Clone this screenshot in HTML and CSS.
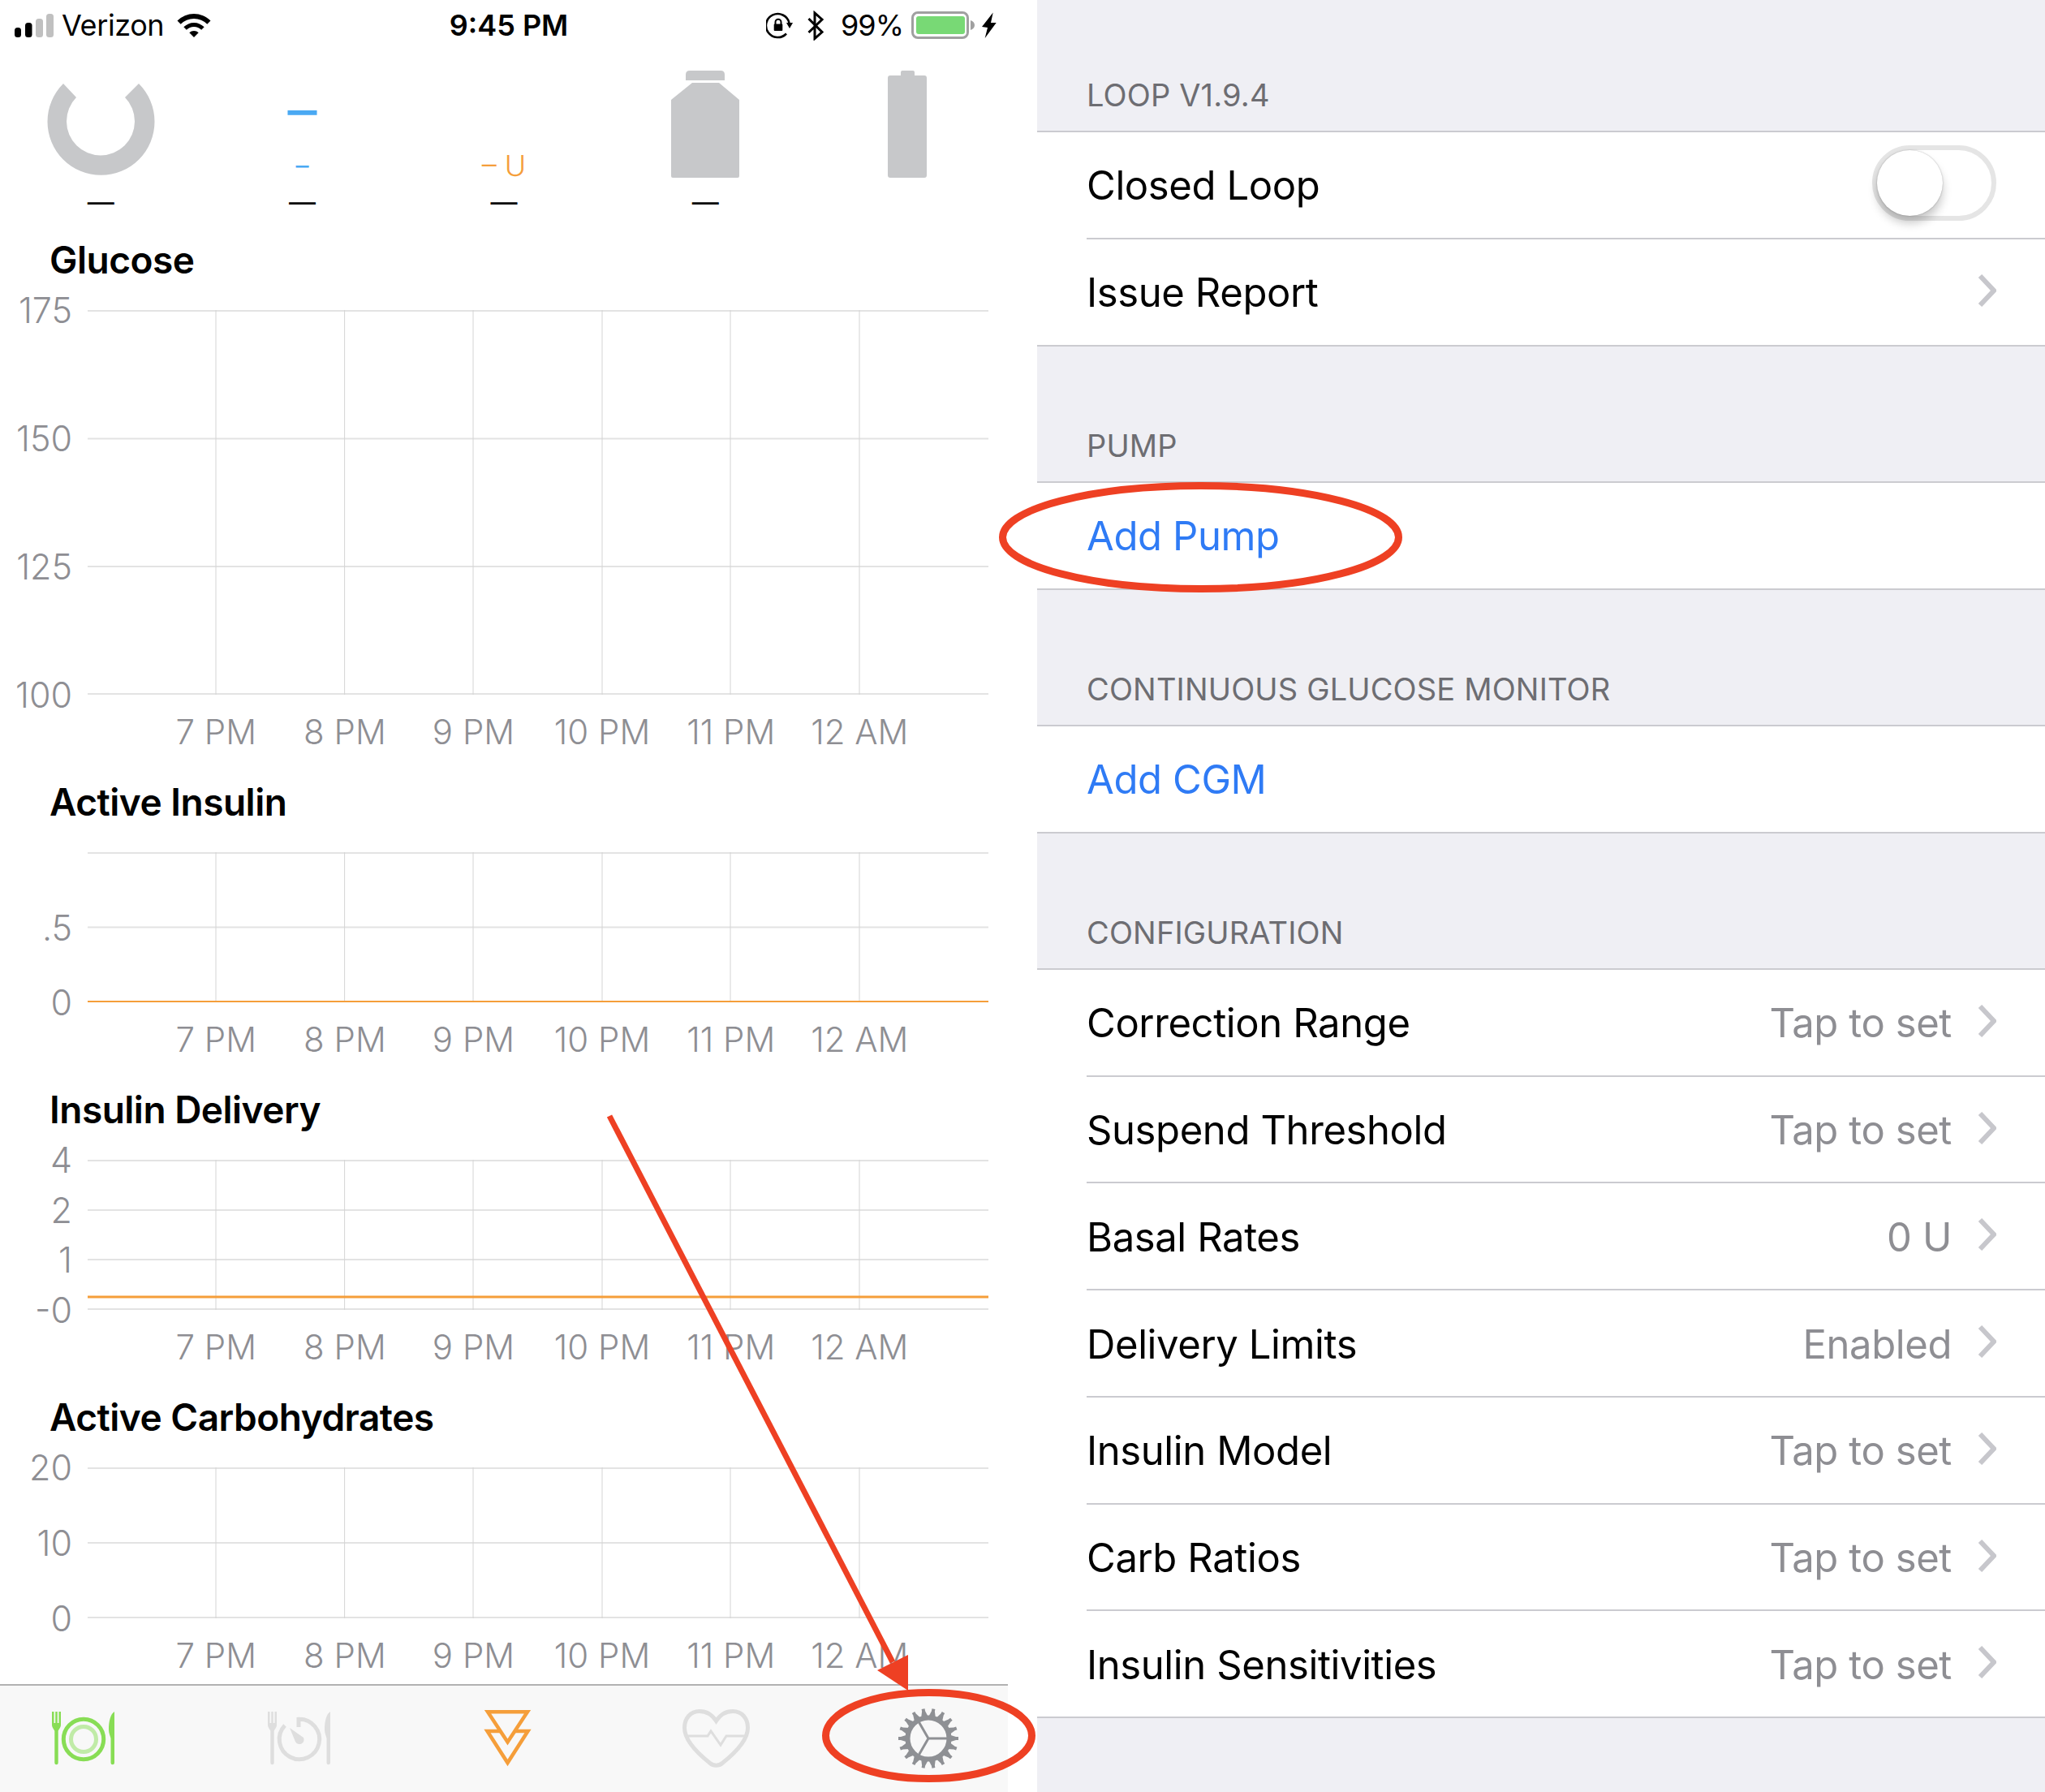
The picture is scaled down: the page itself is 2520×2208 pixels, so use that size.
FILE: index.html
```html
<!DOCTYPE html>
<html lang="en">
<head>
  <meta charset="UTF-8">
  <meta name="viewport" content="width=device-width, initial-scale=1">
  <title>Loop</title>
  <link rel="stylesheet" href="styles.css">
</head>
<body>

  <div class="page">

    <!-- Status screen -->
    <main class="phone">
      <header class="status-bar">
        <div class="status-left">
          <svg class="signal" width="48" height="29" viewBox="0 0 48 29">
            <rect x="0" y="17" width="8" height="12" rx="3.5" fill="#000"/>
            <rect x="13" y="11" width="8.5" height="18" rx="3.5" fill="#000"/>
            <rect x="26" y="6" width="9" height="23" rx="3.5" fill="#c0c0c0"/>
            <rect x="39" y="0" width="9" height="29" rx="3.5" fill="#c0c0c0"/>
          </svg>
          <span class="carrier">Verizon</span>
          <svg class="wifi" width="42" height="29" viewBox="219 15 42 29">
            <path d="M219.5 23.5A29 29 0 0 1 260.5 23.5L256.3 27.7A23 23 0 0 0 223.7 27.7ZM227.3 31.3A18 18 0 0 1 252.7 31.3L249.2 34.8A13 13 0 0 0 230.8 34.8ZM234.3 38.3A8 8 0 0 1 245.7 38.3L240 44Z"/>
          </svg>
        </div>
        <div class="status-time">9:45 PM</div>
        <div class="status-right">
          <svg class="rotation-lock" width="34" height="34" viewBox="944 14 34 34">
            <path d="M972.5 28A14.5 14.5 0 1 0 969 41.5" fill="none" stroke="#000" stroke-width="2.6"/>
            <path d="M969 28H977L973 35Z"/>
            <rect x="953.7" y="29.5" width="10.6" height="8.5" rx="1"/>
            <path d="M955.5 30V27.2a3.5 3.5 0 0 1 7 0V30" fill="none" stroke="#000" stroke-width="2"/>
          </svg>
          <svg class="bluetooth" width="22" height="37" viewBox="996 12 22 37">
            <path d="M998.5 22L1015 38.5L1006 46.5V15L1015 23L998.5 39" fill="none" stroke="#000" stroke-width="3"/>
          </svg>
          <span class="battery-level">99%</span>
          <svg class="battery" width="79" height="34" viewBox="1122 13 79 34">
            <rect x="1123.5" y="14.5" width="68" height="31" rx="6.5" fill="none" stroke="#a0a0a0" stroke-width="3"/>
            <rect x="1128" y="19" width="60" height="22" rx="3" fill="#78d975"/>
            <path d="M1195 24C1198 25 1200 27 1200 30C1200 33 1198 35 1195 36Z" fill="#a0a0a0"/>
          </svg>
          <svg class="bolt" width="18" height="32" viewBox="1209 14 18 32">
            <path d="M1222.7 14.5L1209 32L1216 33L1212.7 46L1226.7 27L1220 27Z"/>
          </svg>
        </div>
      </header>

      <section class="hud">
        <div class="hud-item">
          <div class="hud-icon">
            <svg class="hud-svg" width="133" height="164" viewBox="58 62 133 164">
              <path d="M78 103A66 66 0 1 0 171 103L154 120A42 42 0 1 1 94 120Z" fill="#c7c8ca"/>
            </svg>
          </div>
          <div class="hud-caption">—</div>
        </div>
        <div class="hud-item">
          <div class="hud-icon">
            <span class="glucose-value">–</span>
            <span class="glucose-unit">–</span>
          </div>
          <div class="hud-caption">—</div>
        </div>
        <div class="hud-item">
          <div class="hud-icon">
            <span class="iob-value">– U</span>
          </div>
          <div class="hud-caption">—</div>
        </div>
        <div class="hud-item">
          <div class="hud-icon">
            <svg class="hud-svg" width="84" height="164" viewBox="827 62 84 164">
              <path d="M845 99V92Q845 87 850 87H888Q893 87 893 92V99ZM853 102H886L911 123V217Q911 219 909 219H829Q827 219 827 217V123Z" fill="#c7c8ca"/>
            </svg>
          </div>
          <div class="hud-caption">—</div>
        </div>
        <div class="hud-item">
          <div class="hud-icon">
            <svg class="hud-svg" width="48" height="164" viewBox="1094 62 48 164">
              <path d="M1110 93V89Q1110 87 1112 87H1125Q1127 87 1127 89V93H1139Q1142 93 1142 96V216Q1142 219 1139 219H1097Q1094 219 1094 216V96Q1094 93 1097 93Z" fill="#c7c8ca"/>
            </svg>
          </div>
        </div>
      </section>

      <section class="chart">
        <h2 class="chart-title">Glucose</h2>
        <div class="chart-body">
          <div class="y-axis"><span>175</span><span>150</span><span>125</span><span>100</span></div>
          <svg class="plot" width="1110" height="474" viewBox="0 0 1110 474">
            <path class="grid-h" d="M0 1H1110M0 158.5H1110M0 316H1110M0 473H1110"/>
            <path class="grid-v" d="M158 0V474M316.6 0V474M475 0V474M634 0V474M792 0V474M951 0V474"/>
          </svg>
        </div>
        <div class="x-axis"><span>7 PM</span><span>8 PM</span><span>9 PM</span><span>10 PM</span><span>11 PM</span><span>12 AM</span></div>
      </section>

      <section class="chart">
        <h2 class="chart-title">Active Insulin</h2>
        <div class="chart-body">
          <div class="y-axis"><span></span><span>.5</span><span>0</span></div>
          <svg class="plot" width="1110" height="185" viewBox="0 0 1110 185">
            <path class="grid-h" d="M0 1H1110M0 92.5H1110M0 184H1110"/>
            <path class="grid-v" d="M158 0V185M316.6 0V185M475 0V185M634 0V185M792 0V185M951 0V185"/>
            <path class="data-line" d="M0 184H1110"/>
          </svg>
        </div>
        <div class="x-axis"><span>7 PM</span><span>8 PM</span><span>9 PM</span><span>10 PM</span><span>11 PM</span><span>12 AM</span></div>
      </section>

      <section class="chart">
        <h2 class="chart-title">Insulin Delivery</h2>
        <div class="chart-body">
          <div class="y-axis"><span>4</span><span>2</span><span>1</span><span>-0</span></div>
          <svg class="plot" width="1110" height="185" viewBox="0 0 1110 185">
            <path class="grid-h" d="M0 1H1110M0 62H1110M0 123H1110M0 184H1110"/>
            <path class="grid-v" d="M158 0V185M316.6 0V185M475 0V185M634 0V185M792 0V185M951 0V185"/>
            <path class="data-line thick" d="M0 169H1110"/>
          </svg>
        </div>
        <div class="x-axis"><span>7 PM</span><span>8 PM</span><span>9 PM</span><span>10 PM</span><span>11 PM</span><span>12 AM</span></div>
      </section>

      <section class="chart">
        <h2 class="chart-title">Active Carbohydrates</h2>
        <div class="chart-body">
          <div class="y-axis"><span>20</span><span>10</span><span>0</span></div>
          <svg class="plot" width="1110" height="186" viewBox="0 0 1110 186">
            <path class="grid-h" d="M0 1H1110M0 93H1110M0 185H1110"/>
            <path class="grid-v" d="M158 0V186M316.6 0V186M475 0V186M634 0V186M792 0V186M951 0V186"/>
          </svg>
        </div>
        <div class="x-axis"><span>7 PM</span><span>8 PM</span><span>9 PM</span><span>10 PM</span><span>11 PM</span><span>12 AM</span></div>
      </section>

      <nav class="tab-bar">
        <svg class="tab-carbs" width="77" height="66" viewBox="0 0 77 66">
          <path class="green" d="M0 0H2.5V14H4.25V0H6.75V14H8.5V0H11V16C11 20 8 22 7.7 24V63A2.2 2.2 0 0 1 3.3 63V24C3 22 0 20 0 16Z"/>
          <path class="green" d="M77 0C72 3 70 12 70 22C70 27 72 30 72.5 33V63A2.25 2.25 0 0 0 77 63Z"/>
          <circle class="green-ring" cx="39" cy="34" r="24.7"/>
          <circle class="green-ring faded" cx="39" cy="34" r="15.5"/>
        </svg>
        <svg class="tab-bolus" width="77" height="66" viewBox="0 0 77 66">
          <path class="gray" d="M0 0H2.5V14H4.25V0H6.75V14H8.5V0H11V16C11 20 8 22 7.7 24V63A2.2 2.2 0 0 1 3.3 63V24C3 22 0 20 0 16Z"/>
          <path class="gray" d="M77 0C72 3 70 12 70 22C70 27 72 30 72.5 33V63A2.25 2.25 0 0 0 77 63Z"/>
          <path class="gray-ring" d="M38 19V9.3A24.7 24.7 0 1 1 21 17"/>
          <path class="gray" d="M27 20L44 32A5.5 5.5 0 1 1 34 37Z"/>
        </svg>
        <svg class="tab-insulin" width="61" height="70" viewBox="0 0 61 70">
          <path class="orange-line" d="M6 2.2H55L30.5 39.5Z"/>
          <path class="orange-line" d="M21 26H5.5L30.5 65L55.5 26H40"/>
        </svg>
        <svg class="tab-health" width="83" height="72" viewBox="0 0 83 72">
          <path class="gray-ring" d="M41.5 14.5C36 6 28 2.5 21 2.5C10 2.5 2.5 11 2.5 23C2.5 40 22 57 34 66.5C38 70 45 70 49 66.5C61 57 80.5 40 80.5 23C80.5 11 73 2.5 62 2.5C55 2.5 47 6 41.5 14.5Z"/>
          <path class="gray-pulse" d="M4 33H31L35 27L47 44L54 33H79"/>
        </svg>
        <svg class="tab-settings" width="74" height="74" viewBox="0 0 74 74">
          <defs>
            <path id="gear-teeth" d="M0 35H3L11 32.5V41.5L3 39H0ZM74 35H71L63 32.5V41.5L71 39H74Z"/>
          </defs>
          <g class="gear-fill">
            <use href="#gear-teeth"/>
            <use href="#gear-teeth" transform="rotate(20 37 37)"/>
            <use href="#gear-teeth" transform="rotate(40 37 37)"/>
            <use href="#gear-teeth" transform="rotate(60 37 37)"/>
            <use href="#gear-teeth" transform="rotate(80 37 37)"/>
            <use href="#gear-teeth" transform="rotate(100 37 37)"/>
            <use href="#gear-teeth" transform="rotate(120 37 37)"/>
            <use href="#gear-teeth" transform="rotate(140 37 37)"/>
            <use href="#gear-teeth" transform="rotate(160 37 37)"/>
          </g>
          <circle class="gear-ring" cx="37" cy="37" r="25.5"/>
          <path class="gear-spokes" d="M37 37H61M37 37L25 16.2M37 37L25 57.8"/>
        </svg>
      </nav>
    </main>

    <!-- Settings screen -->
    <aside class="settings">
      <h3 class="section-title first">LOOP V1.9.4</h3>
      <div class="section">
        <div class="row">
          <div class="row-body">
            <span>Closed Loop</span>
            <span class="toggle"><span class="knob"></span></span>
          </div>
        </div>
        <div class="row">
          <div class="row-body">
            <span>Issue Report</span>
            <svg class="chevron" width="23" height="40" viewBox="0 0 23 40"><path d="M3 2L20 20L3 38"/></svg>
          </div>
        </div>
      </div>

      <h3 class="section-title">PUMP</h3>
      <div class="section">
        <div class="row">
          <div class="row-body link">Add Pump</div>
        </div>
      </div>

      <h3 class="section-title">CONTINUOUS GLUCOSE MONITOR</h3>
      <div class="section">
        <div class="row">
          <div class="row-body link">Add CGM</div>
        </div>
      </div>

      <h3 class="section-title">CONFIGURATION</h3>
      <div class="section">
        <div class="row">
          <div class="row-body">
            <span>Correction Range</span>
            <span class="value">Tap to set</span>
            <svg class="chevron" width="23" height="40" viewBox="0 0 23 40"><path d="M3 2L20 20L3 38"/></svg>
          </div>
        </div>
        <div class="row">
          <div class="row-body">
            <span>Suspend Threshold</span>
            <span class="value">Tap to set</span>
            <svg class="chevron" width="23" height="40" viewBox="0 0 23 40"><path d="M3 2L20 20L3 38"/></svg>
          </div>
        </div>
        <div class="row">
          <div class="row-body">
            <span>Basal Rates</span>
            <span class="value">0 U</span>
            <svg class="chevron" width="23" height="40" viewBox="0 0 23 40"><path d="M3 2L20 20L3 38"/></svg>
          </div>
        </div>
        <div class="row">
          <div class="row-body">
            <span>Delivery Limits</span>
            <span class="value">Enabled</span>
            <svg class="chevron" width="23" height="40" viewBox="0 0 23 40"><path d="M3 2L20 20L3 38"/></svg>
          </div>
        </div>
        <div class="row">
          <div class="row-body">
            <span>Insulin Model</span>
            <span class="value">Tap to set</span>
            <svg class="chevron" width="23" height="40" viewBox="0 0 23 40"><path d="M3 2L20 20L3 38"/></svg>
          </div>
        </div>
        <div class="row">
          <div class="row-body">
            <span>Carb Ratios</span>
            <span class="value">Tap to set</span>
            <svg class="chevron" width="23" height="40" viewBox="0 0 23 40"><path d="M3 2L20 20L3 38"/></svg>
          </div>
        </div>
        <div class="row">
          <div class="row-body">
            <span>Insulin Sensitivities</span>
            <span class="value">Tap to set</span>
            <svg class="chevron" width="23" height="40" viewBox="0 0 23 40"><path d="M3 2L20 20L3 38"/></svg>
          </div>
        </div>
      </div>
    </aside>

    <!-- Red marks drawn over the two screenshots -->
    <svg class="marks" width="2520" height="2208" viewBox="0 0 2520 2208">
      <ellipse cx="1479.5" cy="662" rx="244" ry="63.5"/>
      <ellipse cx="1144.5" cy="2138.5" rx="127" ry="53"/>
      <line x1="751" y1="1375" x2="1100" y2="2048"/>
      <polygon points="1119,2083 1119,2039 1081,2058"/>
    </svg>
  </div>

</body>
</html>
```

FILE: styles.css
```css
* { box-sizing: border-box; }
body { margin: 0; background: #fff; font-family: "Inter", "Liberation Sans", sans-serif; color: #000; }
h2, h3 { margin: 0; }

.page { position: relative; display: flex; gap: 36px; width: 2520px; height: 2208px; overflow: hidden; }
.phone { display: flex; flex-direction: column; width: 1242px; height: 2208px; }
.phone > * { flex: none; }

/* status bar */
.status-bar { display: grid; grid-template-columns: 1fr auto 1fr; align-items: center; height: 62px; padding: 0 14px 0 18px; font-size: 36px; }
.status-left, .status-right { display: flex; align-items: center; }
.status-right { justify-content: flex-end; }
.carrier { margin-left: 10px; letter-spacing: -0.4px; }
.wifi { margin-left: 16px; }
.status-time { padding-left: 8px; font-weight: 600; }
.bluetooth { margin-left: 16px; }
.battery-level { margin-left: 20px; letter-spacing: -1px; }
.battery { margin-left: 10px; }
.bolt { margin-left: 8px; }

/* hud */
.hud { display: flex; height: 227px; }
.hud-item { display: flex; flex-direction: column; align-items: center; width: 248.4px; }
.hud-icon { display: flex; flex-direction: column; align-items: center; height: 164px; }
.hud-caption { height: 46px; font-size: 33px; line-height: 46px; }
.glucose-value { margin-top: 43px; font-size: 72px; line-height: 60px; color: #4aa9f3; }
.glucose-unit { margin-top: 19px; font-size: 32px; line-height: 40px; color: #4aa9f3; }
.iob-value { margin-top: 122px; font-size: 36px; line-height: 40px; font-weight: 300; color: #f59e3a; }

/* charts */
.chart + .chart { margin-top: 25px; }
.chart-title { height: 93px; padding: 0 0 31px 61px; font-size: 46px; font-weight: 600; line-height: 62px; letter-spacing: -0.5px; }
.chart-body { display: flex; }
.y-axis { display: flex; flex-direction: column; justify-content: space-between; width: 108px; padding-right: 19px; text-align: right; font-size: 43px; font-weight: 300; color: #8e8e93; }
.y-axis span { height: 0; line-height: 0; }
.plot { display: block; }
.grid-h { fill: none; stroke: #e3e3e3; stroke-width: 2; }
.grid-v { fill: none; stroke: #d4d4d4; stroke-width: 1; }
.data-line { fill: none; stroke: #f59e3a; stroke-width: 2; }
.data-line.thick { stroke-width: 3; }
.x-axis { display: grid; grid-template-columns: repeat(6, 158.6px); height: 76px; padding: 16px 0 0 187px; font-size: 42px; font-weight: 300; line-height: 60px; text-align: center; color: #8e8e93; white-space: nowrap; }

/* tab bar */
.tab-bar { display: flex; align-items: center; height: 133px; margin-top: auto; padding: 0 0 2px 64px; background: #f8f8f8; border-top: 2px solid #b2b2b2; }
.tab-bolus { margin-left: 189px; }
.tab-insulin { margin-left: 188px; }
.tab-health { margin-left: 185px; }
.tab-settings { margin-left: 183px; }
.green { fill: #88dd55; }
.green-ring { fill: none; stroke: #88dd55; stroke-width: 5; }
.green-ring.faded { opacity: 0.5; }
.gray { fill: #dedede; }
.gray-ring { fill: none; stroke: #dedede; stroke-width: 5; }
.gray-pulse { fill: none; stroke: #dedede; stroke-width: 3; }
.orange-line { fill: none; stroke: #f59e3a; stroke-width: 4.5; }
.gear-fill { fill: #8e9094; }
.gear-ring { fill: none; stroke: #8e9094; stroke-width: 6; }
.gear-spokes { fill: none; stroke: #8e9094; stroke-width: 3; }

/* settings */
.settings { width: 1242px; height: 2208px; background: #efeff4; }
.section-title { display: flex; align-items: center; height: 166.3px; padding: 78px 61px 0; font-size: 38px; font-weight: 400; color: #6d6d72; letter-spacing: 0.15px; }
.section-title.first { height: 161px; padding-top: 73px; }
.section { background: #fff; border-top: 2px solid #cbcbd0; border-bottom: 2px solid #cbcbd0; }
.row { height: 131.75px; padding-left: 61px; }
.row:last-child { height: 129.75px; }
.row-body { display: flex; align-items: center; height: 100%; padding: 2px 60px 0 0; font-size: 49px; letter-spacing: -0.4px; border-bottom: 2px solid #cbcbd0; }
.row:last-child .row-body { border-bottom: 0; }
.row-body.link { color: #2f7bf5; }
.value { margin-left: auto; margin-right: 32px; color: #8e8e93; }
.chevron { display: block; margin-bottom: 6px; }
.chevron path { fill: none; stroke: #c7c7cc; stroke-width: 6; }
.row-body > span:first-child + .chevron { margin-left: auto; }
.toggle { display: block; width: 153px; height: 93px; margin-left: auto; margin-bottom: 6px; background: #fff; border: 6px solid #e5e5e5; border-radius: 47px; }
.knob { display: block; width: 81px; height: 81px; background: #fff; border-radius: 50%; box-shadow: 0 9px 12px rgba(0, 0, 0, 0.22), 0 0 2px rgba(0, 0, 0, 0.3); }

/* overlay marks */
.marks { position: absolute; top: 0; left: 0; pointer-events: none; }
.marks ellipse { fill: none; stroke: #ee4023; stroke-width: 9; }
.marks line { stroke: #ee4023; stroke-width: 7; }
.marks polygon { fill: #ee4023; }
```
